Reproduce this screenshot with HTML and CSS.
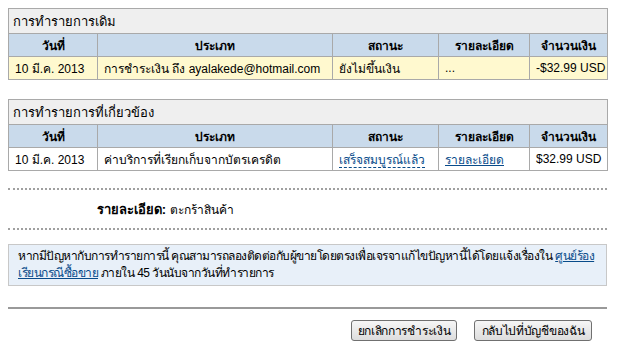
FILE: index.html
```html
<!DOCTYPE html>
<html lang="th">
  <head>
    <meta charset="utf-8">
    <title>รายละเอียดการทำรายการ</title>
    <link rel="stylesheet" href="styles.css">
  </head>
  <body>
    <div class='page'>
        <table class='txn'>
            <colgroup>
                <col class='c-date'><col class='c-type'><col class='c-status'><col class='c-info'><col class='c-amount'>
            </colgroup>
            <tr><th class='caption' colspan='5'>การทำรายการเดิม</th></tr>
            <tr class='head'>
                <th>วันที่</th>
                <th>ประเภท</th>
                <th>สถานะ</th>
                <th>รายละเอียด</th>
                <th>จำนวนเงิน</th>
            </tr>
            <tr class='row pending'>
                <td>10 มี.ค. 2013</td>
                <td>การชำระเงิน ถึง ayalakede@hotmail.com</td>
                <td>ยังไม่ขึ้นเงิน</td>
                <td>...</td>
                <td class='money'>-$32.99 USD</td>
            </tr>
        </table>

        <table class='txn'>
            <colgroup>
                <col class='c-date'><col class='c-type'><col class='c-status'><col class='c-info'><col class='c-amount'>
            </colgroup>
            <tr><th class='caption' colspan='5'>การทำรายการที่เกี่ยวข้อง</th></tr>
            <tr class='head'>
                <th>วันที่</th>
                <th>ประเภท</th>
                <th>สถานะ</th>
                <th>รายละเอียด</th>
                <th>จำนวนเงิน</th>
            </tr>
            <tr class='row'>
                <td>10 มี.ค. 2013</td>
                <td>ค่าบริการที่เรียกเก็บจากบัตรเครดิต</td>
                <td><a class='dashed' href='#'>เสร็จสมบูรณ์แล้ว</a></td>
                <td><a href='#'>รายละเอียด</a></td>
                <td class='money'>$32.99 USD</td>
            </tr>
        </table>

        <div class='details'>
            <span class='label'>รายละเอียด:</span>
            <span class='value'>ตะกร้าสินค้า</span>
        </div>

        <div class='notice'>
            หากมีปัญหากับการทำรายการนี้ คุณสามารถลองติดต่อกับผู้ขายโดยตรงเพื่อเจรจาแก้ไขปัญหานี้ได้โดยแจ้งเรื่องใน <a href='#'>ศูนย์ร้อง<br>เรียนกรณีซื้อขาย</a> ภายใน 45 วันนับจากวันที่ทำรายการ
        </div>

        <div class='actions'>
            <button class='btn btn-cancel'>ยกเลิกการชำระเงิน</button>
            <button class='btn btn-back'>กลับไปที่บัญชีของฉัน</button>
        </div>
    </div>
  </body>
</html>
```

FILE: styles.css
```css
body {
    margin: 0;
    background-color: #FFFFFF;
    font-family: "Liberation Sans", Arial, sans-serif;
    font-size: 12px;
    color: #000000;
}
.page {
    width: 599px;
    padding: 8px 10px 0 8px;
}
.txn {
    width: 100%;
    table-layout: fixed;
    border-collapse: collapse;
    border: 1px solid #A9A9A9;
    margin-bottom: 19px;
}
.txn th,
.txn td {
    border: 1px solid #A9A9A9;
    padding: 0 6px;
    white-space: nowrap;
    overflow: hidden;
}
.c-date { width: 89px; }
.c-type { width: 235px; }
.c-status { width: 106px; }
.c-info { width: 91px; }
.c-amount { width: 78px; }
.txn .caption {
    height: 24px;
    background-color: #EFEFEF;
    text-align: left;
    font-weight: normal;
    font-size: 13px;
    padding-left: 4px;
}
.head th {
    height: 22px;
    background-color: #C9DAEB;
    font-weight: bold;
    font-size: 12px;
    text-align: center;
}
.row td {
    height: 22px;
}
.pending td {
    background-color: #FFF9CF;
}
.money {
    text-align: right;
}
.txn a,
.notice a {
    color: #084B8A;
}
.txn a.dashed {
    text-decoration: none;
    border-bottom: 1px dashed #084B8A;
}
.details {
    margin-top: -2px;
    border-top: 2px dotted #A0A0A0;
    border-bottom: 2px dotted #A0A0A0;
    height: 38px;
    display: flex;
    align-items: center;
    font-size: 12px;
}
.details .label {
    width: 158px;
    text-align: right;
    font-weight: bold;
    font-size: 13px;
    padding-right: 4px;
}
.notice {
    margin-top: 14px;
    background-color: #E8F0F9;
    border: 1px solid #C8C8C8;
    padding: 3px 9px 3px 9px;
    font-size: 12px;
    line-height: 17px;
    letter-spacing: -0.5px;
    white-space: nowrap;
}
.actions {
    margin-top: 21px;
    border-top: 2px solid #999999;
    padding-top: 11px;
    display: flex;
    justify-content: flex-end;
    gap: 17px;
    padding-right: 15px;
}
.btn {
    height: 21px;
    padding: 0;
    font-family: Tahoma, "DejaVu Sans", "Noto Sans", sans-serif;
    font-size: 12px;
    letter-spacing: -0.3px;
    border: 1px solid #707070;
    border-radius: 3px;
    background: linear-gradient(#F6F6F6, #DDDDDD);
    color: #000000;
    white-space: nowrap;
}
.btn-cancel { width: 106px; }
.btn-back { width: 118px; }
```
